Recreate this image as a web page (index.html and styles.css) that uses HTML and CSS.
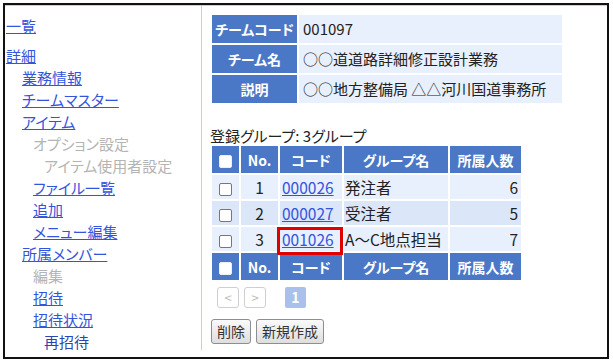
FILE: index.html
```html
<!DOCTYPE html>
<html lang="ja">

<head>
    <title>チーム詳細</title>
    <meta charset="UTF-8">
    <link rel="stylesheet" href="styles.css">
</head>

<body>
<div class="frame">
    <div class="layout">
        <div class="side">
            <ul class="nav">
                <li><a href="#">一覧</a></li>
                <li class="group"><a href="#">詳細</a>
                    <ul>
                        <li><a href="#">業務情報</a></li>
                        <li><a href="#">チームマスター</a></li>
                        <li><a href="#">アイテム</a>
                            <ul>
                                <li><span class="off">オプション設定</span>
                                    <ul>
                                        <li><span class="off">アイテム使用者設定</span></li>
                                    </ul>
                                </li>
                                <li><a href="#">ファイル一覧</a></li>
                                <li><a href="#">追加</a></li>
                                <li><a href="#">メニュー編集</a></li>
                            </ul>
                        </li>
                        <li><a href="#">所属メンバー</a>
                            <ul>
                                <li><span class="off">編集</span></li>
                                <li><a href="#">招待</a></li>
                                <li><a href="#">招待状況</a>
                                    <ul>
                                        <li><span class="current">再招待</span></li>
                                    </ul>
                                </li>
                            </ul>
                        </li>
                    </ul>
                </li>
            </ul>
        </div>

        <div class="main">
            <table class="info">
                <tr>
                    <th>チームコード</th>
                    <td>001097</td>
                </tr>
                <tr>
                    <th>チーム名</th>
                    <td>○○道道路詳細修正設計業務</td>
                </tr>
                <tr>
                    <th>説明</th>
                    <td>○○地方整備局 △△河川国道事務所</td>
                </tr>
            </table>

            <div class="caption">登録グループ: 3グループ</div>
            <table class="groups">
                <tr class="head">
                    <th class="c-check"><span class="check white"></span></th>
                    <th class="c-no">No.</th>
                    <th class="c-code">コード</th>
                    <th class="c-name">グループ名</th>
                    <th class="c-count">所属人数</th>
                </tr>
                <tr>
                    <td class="c-check"><span class="check"></span></td>
                    <td class="c-no">1</td>
                    <td class="c-code"><a href="#">000026</a></td>
                    <td class="c-name">発注者</td>
                    <td class="c-count">6</td>
                </tr>
                <tr class="alt">
                    <td class="c-check"><span class="check"></span></td>
                    <td class="c-no">2</td>
                    <td class="c-code"><a href="#">000027</a></td>
                    <td class="c-name">受注者</td>
                    <td class="c-count">5</td>
                </tr>
                <tr>
                    <td class="c-check"><span class="check"></span></td>
                    <td class="c-no">3</td>
                    <td class="c-code marked"><a href="#">001026</a><span class="mark"></span></td>
                    <td class="c-name">A～C地点担当</td>
                    <td class="c-count">7</td>
                </tr>
                <tr class="head">
                    <th class="c-check"><span class="check white"></span></th>
                    <th class="c-no">No.</th>
                    <th class="c-code">コード</th>
                    <th class="c-name">グループ名</th>
                    <th class="c-count">所属人数</th>
                </tr>
            </table>

            <div class="pager">
                <span class="page-btn">&lt;</span>
                <span class="page-btn">&gt;</span>
                <span class="page-num">1</span>
            </div>

            <div class="actions">
                <button type="button">削除</button>
                <button type="button">新規作成</button>
            </div>
        </div>
    </div>
</div>
</body>

</html>
```

FILE: styles.css
```css
:root {
    --head-blue: #4b78c6;
    --cell-light: #e7f0fc;
    --cell-alt: #dbe7f8;
    --link: #3554dc;
    --divider: #c3d0e3;
}

body {
    margin: 0;
    font-family: "Noto Sans CJK JP", "Noto Sans", sans-serif;
    font-feature-settings: "palt";
    font-size: 15px;
    color: #222;
    background: #fff;
}

.frame {
    margin: 3px;
    width: 602px;
    height: 352px;
    border: 2px solid #111;
    overflow: hidden;
}

.layout {
    display: flex;
    border-top: 1px solid var(--divider);
}

/* left menu */
.side {
    flex: none;
    width: 196px;
    height: 344px;
    border-right: 1px solid var(--divider);
}

.nav,
.nav ul {
    list-style: none;
    margin: 0;
    padding: 0;
}

.nav {
    padding: 9px 0 0 1px;
    line-height: 22px;
}

.nav > li > ul {
    padding-left: 16px;
}

.nav ul ul {
    padding-left: 11px;
}

.nav .group {
    margin-top: 8px;
}

.nav a {
    color: var(--link);
}

.nav .off {
    color: #b4b4b4;
}

.nav .current {
    color: #2c44b0;
}

/* right content */
.main {
    padding: 7px 0 0 8px;
}

table {
    border-collapse: separate;
    border-spacing: 2px;
}

th,
td {
    box-sizing: border-box;
    white-space: nowrap;
    line-height: 20px;
}

th {
    background: var(--head-blue);
    color: #fff;
    font-weight: bold;
    font-size: 14px;
    text-align: center;
    padding: 0 3px;
}

.info th {
    width: 85px;
    height: 28px;
    padding: 0 3px;
}

.info td {
    width: 263px;
    height: 28px;
    padding: 0 4px;
    background: var(--cell-light);
    font-size: 15px;
}

.caption {
    margin-top: 22px;
    line-height: 17px;
    font-size: 15px;
}

.groups td {
    height: 24px;
    padding: 0 2px;
    background: var(--cell-light);
    font-size: 15.5px;
}

.groups tr.alt td {
    background: var(--cell-alt);
}

.groups .head th {
    height: 27px;
    padding: 0;
}

.c-check { width: 27px; text-align: center; }
.c-no { width: 37px; text-align: center; }
.c-code { width: 62px; }
.c-name { width: 104px; }
.c-count { width: 71px; }

.groups td.c-check,
.groups td.c-no {
    padding: 0;
    text-align: center;
}

.groups td.c-name {
    padding: 0 1px;
}

.groups td.c-count {
    padding: 0 3px 0 0;
    text-align: right;
}

.groups a {
    color: var(--link);
}

.check {
    display: inline-block;
    width: 11px;
    height: 11px;
    border: 1px solid #777;
    border-radius: 2px;
    background: #fff;
    vertical-align: middle;
}

.check.white {
    border-color: #eee;
}

.marked {
    position: relative;
}

.mark {
    position: absolute;
    top: 0;
    bottom: -4px;
    left: -3px;
    right: -1px;
    border: 3px solid #e00000;
}

/* pager */
.pager {
    display: flex;
    align-items: center;
    gap: 5px;
    margin-top: 5px;
    padding-left: 7px;
}

.page-btn {
    width: 20px;
    height: 19px;
    border: 1px solid #cfcfcf;
    border-radius: 3px;
    color: #bdbdbd;
    font-size: 13px;
    line-height: 19px;
    text-align: center;
}

.page-num {
    width: 21px;
    height: 21px;
    margin-left: 14px;
    border-radius: 2px;
    background: #a9c1ea;
    color: #fff;
    font-weight: bold;
    font-size: 14px;
    line-height: 21px;
    text-align: center;
}

/* buttons */
.actions {
    display: flex;
    gap: 5px;
    margin-top: 11px;
    padding-left: 1px;
}

button {
    height: 25px;
    padding: 0 5px;
    font-family: inherit;
    font-feature-settings: "palt";
    font-size: 14px;
    color: #333;
    background: linear-gradient(#fafafa, #dedede);
    border: 1px solid #8e8e8e;
    border-radius: 3px;
    line-height: 21px;
}
```
